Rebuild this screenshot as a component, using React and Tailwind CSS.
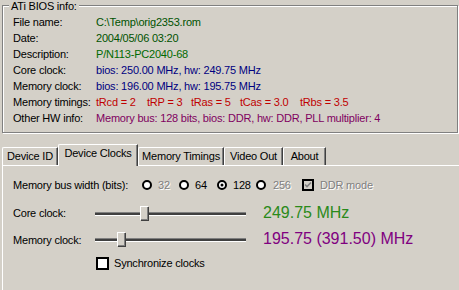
import React from "react";

const INFO_ROWS = [
  { label: "File name:", value: "C:\\Temp\\orig2353.rom", color: "text-[#005200]" },
  { label: "Date:", value: "2004/05/06 03:20", color: "text-[#005200]" },
  { label: "Description:", value: "P/N113-PC2040-68", color: "text-[#006a00]" },
  { label: "Core clock:", value: "bios: 250.00 MHz, hw: 249.75 MHz", color: "text-[#000080]" },
  { label: "Memory clock:", value: "bios: 196.00 MHz, hw: 195.75 MHz", color: "text-[#000080]" },
];

const TIMINGS = [
  { text: "tRcd = 2", w: "w-[51px]" },
  { text: "tRP = 3", w: "w-[44px]" },
  { text: "tRas = 5", w: "w-[49px]" },
  { text: "tCas = 3.0", w: "w-[60px]" },
  { text: "tRbs = 3.5", w: "" },
];

const TABS = [
  { name: "Device ID", w: "w-[56px]" },
  { name: "Device Clocks", w: "w-[80px]", active: true },
  { name: "Memory Timings", w: "w-[86px]" },
  { name: "Video Out", w: "w-[59px]" },
  { name: "About", w: "w-[43px]" },
];

function Radio({ checked }) {
  return (
    <svg width="10" height="10" viewBox="0 0 10 10" className="shrink-0">
      <circle cx="5" cy="5" r="4" fill="#fff" stroke="#000" strokeWidth="2" />
      {checked && <circle cx="5" cy="5" r="1.5" fill="#000" />}
    </svg>
  );
}

function Slider({ pos }) {
  return (
    <div className="relative w-[151px] h-[14px] flex items-center shrink-0">
      {/* channel */}
      <div className="w-full h-[3px] border-t border-[#808080] bg-[#404040] shadow-[0_1px_0_#fff]" />
      {/* thumb */}
      <div
        className="absolute top-0 w-[8px] h-[14px] bg-[#d4d0c8] border-t border-l border-white shadow-[inset_-1px_-1px_0_#808080,1px_1px_0_#404040]"
        style={{ left: pos }}
      />
    </div>
  );
}

export default function App() {
  return (
    <div
      className="w-[459px] h-[290px] bg-[#d4d0c8] overflow-hidden flex flex-col text-[11px] tracking-[-0.2px] text-black"
      style={{ fontFamily: '"Liberation Sans", Arial, sans-serif' }}
    >
      {/* ── BIOS info group box ───────────────────────────── */}
      <div className="relative mt-[5px] ml-[2px] w-[456px] h-[128px] shrink-0 border border-[#808080] shadow-[inset_1px_1px_0_#fff,1px_1px_0_#fff] pt-[8px] pl-[10px]">
        <span className="absolute left-[6px] top-[-6px] px-[2px] leading-[13px] bg-[#d4d0c8]">
          ATi BIOS info:
        </span>
        <div className="grid grid-cols-[83px_1fr] auto-rows-[16px] items-center leading-[16px]">
          {INFO_ROWS.map((r) => (
            <React.Fragment key={r.label}>
              <span>{r.label}</span>
              <span className={r.color}>{r.value}</span>
            </React.Fragment>
          ))}
          <span>Memory timings:</span>
          <span className="flex text-[#c00000]">
            {TIMINGS.map((t) => (
              <span key={t.text} className={`${t.w} whitespace-pre`}>
                {t.text}
              </span>
            ))}
          </span>
          <span>Other HW info:</span>
          <span className="text-[#800060] whitespace-nowrap">
            Memory bus: 128 bits, bios: DDR, hw: DDR, PLL multiplier: 4
          </span>
        </div>
      </div>

      {/* ── Tab strip ─────────────────────────────────────── */}
      <div className="mt-[11px] h-[21px] pl-[2px] flex items-end shrink-0">
        {TABS.map((t) =>
          t.active ? (
            <div
              key={t.name}
              className={`${t.w} relative z-10 h-[22px] -mb-[1px] bg-[#d4d0c8] border-t border-l border-white rounded-tl-[2px] border-r border-r-[#404040] shadow-[inset_-1px_0_0_#808080] pt-[1px] text-center leading-[14px] whitespace-nowrap`}
            >
              {t.name}
            </div>
          ) : (
            <div
              key={t.name}
              className={`${t.w} h-[18px] bg-[#d4d0c8] border-t border-l border-white rounded-tl-[2px] border-r border-r-[#404040] shadow-[inset_-1px_0_0_#808080] pt-[1px] text-center leading-[14px] whitespace-nowrap`}
            >
              {t.name}
            </div>
          )
        )}
      </div>

      {/* ── Tab panel: Device Clocks ──────────────────────── */}
      <div className="flex-1 ml-[2px] border-t border-l border-white pl-[10px] flex flex-col">
        <div className="mt-[11px] h-[16px] flex items-center leading-[14px]">
          <span className="w-[129px] shrink-0">Memory bus width (bits):</span>
          <div className="w-[37px] flex items-center gap-[6px]">
            <Radio />
            <span className="text-[#808080] [text-shadow:1px_1px_0_#fff]">32</span>
          </div>
          <div className="w-[38px] flex items-center gap-[6px]">
            <Radio />
            <span>64</span>
          </div>
          <div className="w-[39px] flex items-center gap-[6px]">
            <Radio checked />
            <span>128</span>
          </div>
          <div className="w-[46px] flex items-center gap-[7px]">
            <Radio />
            <span className="text-[#808080] [text-shadow:1px_1px_0_#fff]">256</span>
          </div>
          <div className="flex items-center gap-[6px]">
            <div className="w-[12px] h-[12px] border-2 border-black bg-[#d4d0c8] flex items-center justify-center">
              <svg width="8" height="8" viewBox="0 0 8 8">
                <path d="M1 3.5 L3 5.5 L7 1.5" fill="none" stroke="#808080" strokeWidth="1.6" />
              </svg>
            </div>
            <span className="text-[#808080] [text-shadow:1px_1px_0_#fff]">DDR mode</span>
          </div>
        </div>

        <div className="mt-[7px] h-[26px] flex items-center">
          <span className="w-[82px] shrink-0">Core clock:</span>
          <Slider pos={45} />
          <span className="ml-[17px] text-[16px] tracking-normal leading-[18px] text-[#2a8a1a] -mt-[1px]">
            249.75 MHz
          </span>
        </div>

        <div className="h-[26px] flex items-center">
          <span className="w-[82px] shrink-0 mt-[3px]">Memory clock:</span>
          <Slider pos={22} />
          <span className="ml-[17px] text-[16px] tracking-normal leading-[18px] text-[#800080] -mt-[1px]">
            195.75 (391.50) MHz
          </span>
        </div>

        <div className="mt-[3px] h-[16px] flex items-center pl-[83px] gap-[5px]">
          <div className="w-[13px] h-[13px] border-2 border-black bg-white shrink-0" />
          <span>Synchronize clocks</span>
        </div>
      </div>
    </div>
  );
}
